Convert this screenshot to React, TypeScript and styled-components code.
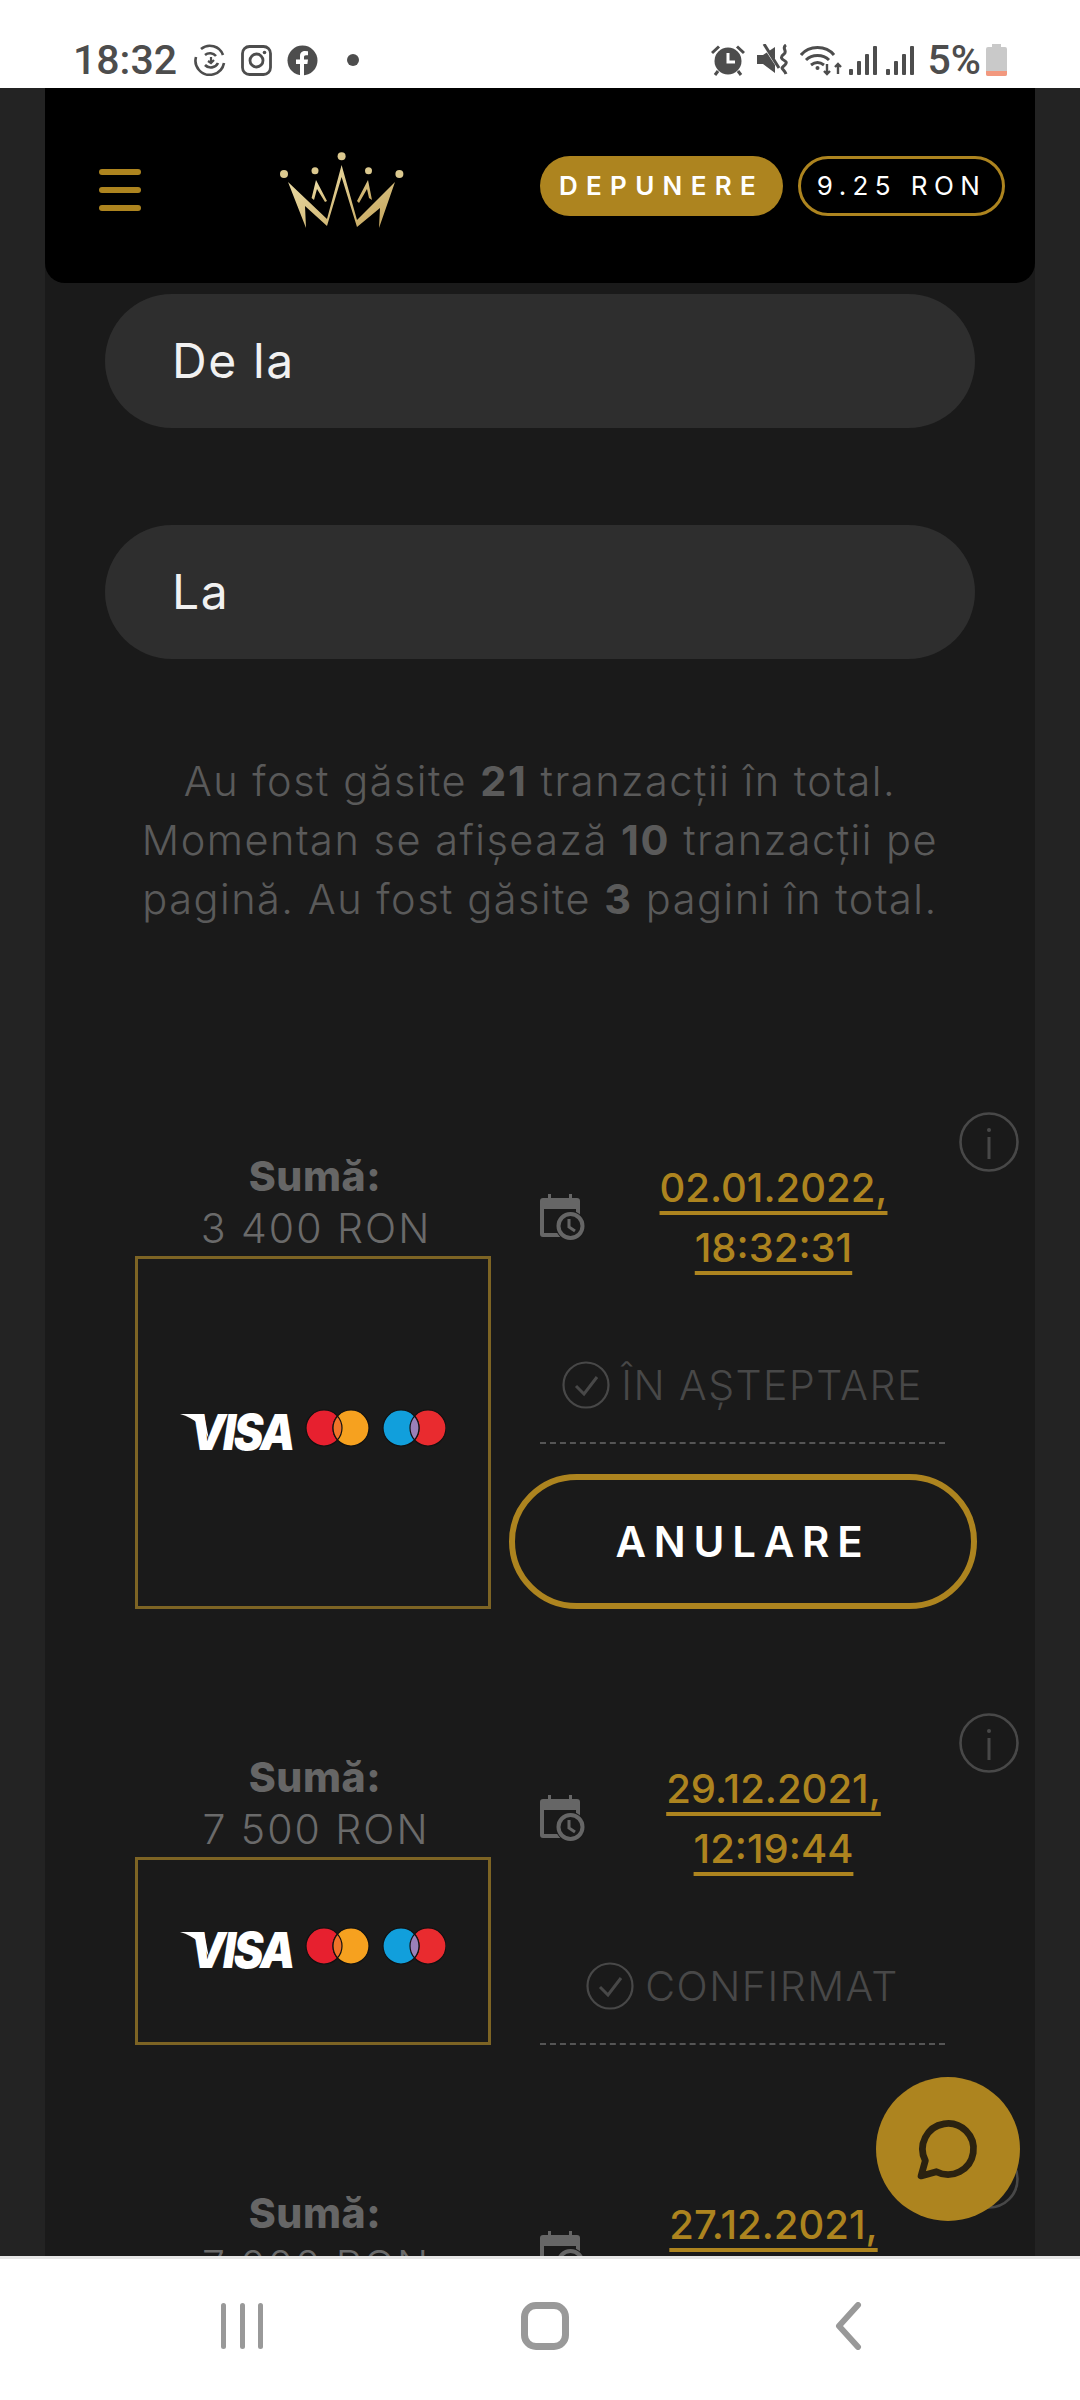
import React from "react";
import styled, { createGlobalStyle } from "styled-components";

const Global = createGlobalStyle`
  html, body { margin: 0; padding: 0; background: #fff; }
  * { box-sizing: border-box; }
`;

const GOLD = "#ad841f";
const SANS = `Inter, "Open Sans", "Liberation Sans", sans-serif`;

const Screen = styled.div`
  width: 1080px;
  height: 2400px;
  display: flex;
  flex-direction: column;
  overflow: hidden;
  font-family: ${SANS};
  background: #fff;
`;

const StatusBar = styled.div`
  height: 88px;
  flex: none;
  display: flex;
  align-items: center;
  padding: 32px 73px 0 73px;
  color: #4d4d4d;
  font-family: Roboto, sans-serif;
  font-weight: 500;
`;
const Clock = styled.span`
  font-size: 41px;
  line-height: 1;
  margin-right: 17px;
`;
const StatusIcon = styled.svg<{ $ml?: number }>`
  display: block;
  flex: none;
  margin-left: ${(p) => p.$ml ?? 0}px;
`;
const Spacer = styled.div`
  flex: 1;
`;
const Percent = styled.span`
  font-size: 41px;
  line-height: 1;
  margin-left: 14px;
  margin-right: 5px;
`;

const Page = styled.div`
  flex: 1;
  min-height: 0;
  position: relative;
  background: #232323;
  overflow: hidden;
`;
const Column = styled.div`
  margin: 0 45px;
  height: 100%;
  background: #1a1a1a;
  overflow: hidden;
`;
const Header = styled.header`
  height: 195px;
  background: #000;
  border-radius: 0 0 20px 20px;
  display: flex;
  align-items: center;
  padding: 0 30px 0 54px;
`;
const Burger = styled.div`
  width: 42px;
  display: flex;
  flex-direction: column;
  gap: 12px;
  margin-top: 9px;
  span {
    display: block;
    height: 6px;
    border-radius: 3px;
    background: ${GOLD};
  }
`;
const Crown = styled.svg`
  display: block;
  margin-left: 139px;
  margin-top: 9px;
`;
const Pill = styled.div<{ $filled?: boolean }>`
  height: 60px;
  border-radius: 30px;
  display: flex;
  align-items: center;
  justify-content: center;
  font-size: 26px;
  color: #fff;
  width: ${(p) => (p.$filled ? 243 : 207)}px;
  margin-left: ${(p) => (p.$filled ? 0 : 15)}px;
  background: ${(p) => (p.$filled ? GOLD : "transparent")};
  border: ${(p) => (p.$filled ? "none" : `3px solid ${GOLD}`)};
  font-weight: ${(p) => (p.$filled ? 600 : 400)};
  letter-spacing: ${(p) => (p.$filled ? 8.3 : 6.4)}px;
`;

const Form = styled.div`
  margin: 11px 60px 0;
  display: flex;
  flex-direction: column;
  gap: 97px;
`;
const Field = styled.div`
  height: 134px;
  border-radius: 67px;
  background: #2e2e2e;
  padding: 0 0 2px 67px;
  display: flex;
  align-items: center;
  color: #f1f1f1;
  font-size: 48px;
  letter-spacing: 1.6px;
  font-weight: 400;
`;
const Summary = styled.p`
  margin: 93px 0 0;
  text-align: center;
  font-size: 41.5px;
  line-height: 59px;
  color: #5a5a5a;
  font-weight: 300;
  letter-spacing: 1.5px;
  b {
    font-weight: 700;
  }
`;
const List = styled.div`
  margin: 219px 0 0 90px;
  width: 842px;
  display: flex;
  flex-direction: column;
  gap: 140px;
`;
const Row = styled.section`
  position: relative;
  display: grid;
  grid-template-columns: 356px 468px;
  column-gap: 18px;
`;
const Left = styled.div`
  padding-top: 2px;
  display: flex;
  flex-direction: column;
  align-items: stretch;
  text-align: center;
`;
const SumLabel = styled.div`
  font-size: 41px;
  line-height: 52px;
  font-weight: 800;
  color: #666;
  padding-left: 4px;
  letter-spacing: 0.6px;
`;
const SumValue = styled.div`
  font-size: 41px;
  line-height: 52px;
  font-weight: 300;
  color: #6a6a6a;
  padding-left: 6px;
  letter-spacing: 2px;
`;
const LogoBox = styled.div`
  margin-top: 2px;
  flex: 1;
  border: 3px solid #7d6424;
  display: flex;
  align-items: center;
  justify-content: center;
`;
const Right = styled.div`
  padding-top: 10px;
  display: flex;
  flex-direction: column;
`;
const Inner = styled.div`
  margin: 0 32px 0 31px;
`;
const DateRow = styled.div`
  display: flex;
  align-items: center;
`;
const DateBlock = styled.div`
  flex: 1;
  padding-left: 16px;
  display: flex;
  flex-direction: column;
  align-items: center;
  font-size: 40px;
  line-height: 60px;
  font-weight: 500;
  color: ${GOLD};
  span {
    text-decoration: underline;
    text-decoration-thickness: 4px;
    text-underline-offset: 9px;
    text-decoration-skip-ink: none;
  }
`;
const Status = styled.div`
  margin-top: 78px;
  height: 88px;
  padding-bottom: 28px;
  border-bottom: 2px dashed #555;
  display: flex;
  align-items: center;
  justify-content: center;
  gap: 11px;
  color: #484848;
  font-size: 41px;
  font-weight: 300;
  letter-spacing: 1.5px;
  white-space: nowrap;
`;
const CancelButton = styled.button`
  margin-top: 30px;
  height: 135px;
  width: 468px;
  border-radius: 68px;
  border: 6px solid ${GOLD};
  background: transparent;
  color: #fff;
  font-family: ${SANS};
  font-size: 42px;
  font-weight: 600;
  letter-spacing: 7.8px;
  padding: 0;
`;
const Info = styled.svg`
  position: absolute;
  top: -36px;
  right: -42px;
  display: block;
`;
const Chat = styled.button`
  position: absolute;
  left: 876px;
  top: 1989px;
  width: 144px;
  height: 144px;
  border-radius: 50%;
  border: none;
  padding: 0;
  background: ${GOLD};
  display: flex;
  align-items: center;
  justify-content: center;
`;

const NavBar = styled.nav`
  height: 144px;
  flex: none;
  background: #fff;
  border-top: 3px solid #e6e6e6;
  display: flex;
  align-items: center;
  padding: 0 0 7px 221px;
`;
const NavBars = styled.div`
  width: 42px;
  height: 46px;
  display: flex;
  justify-content: space-between;
  span {
    width: 5px;
    border-radius: 3px;
    background: #999;
  }
`;
const NavHome = styled.div`
  width: 48px;
  height: 48px;
  margin: 0 265px 0 258px;
  border: 7px solid #999;
  border-radius: 15px;
`;

const AlarmIcon = () => (
  <StatusIcon width="34" height="32" viewBox="0 0 34 32" fill="#4d4d4d">
    <circle cx="17" cy="17" r="13.5" />
    <path d="M1 9 8 2.5 M33 9 26 2.5" stroke="#4d4d4d" strokeWidth="3" fill="none" />
    <path d="M17 9v9h7" stroke="#fff" strokeWidth="3" fill="none" />
    <path d="M7 27 4 31 M27 27l3 4" stroke="#4d4d4d" strokeWidth="3" />
  </StatusIcon>
);

const MuteIcon = () => (
  <StatusIcon $ml={12} width="32" height="32" viewBox="0 0 32 32" fill="#4d4d4d">
    <path d="M0 11h6L18 3v26L6 20H0z" />
    <path d="M6 0 25 29" stroke="#fff" strokeWidth="3" />
    <path d="M7 0 22 24" stroke="#4d4d4d" strokeWidth="3" />
    <path d="M29 1c-5 3 2 6-2 9s-3 5 1 7-3 6-3 7 3 3 4 6" fill="none" stroke="#4d4d4d" strokeWidth="3" />
  </StatusIcon>
);

const WifiIcon = () => (
  <StatusIcon $ml={11} width="42" height="32" viewBox="0 0 42 32" fill="none" stroke="#4d4d4d" strokeWidth="3">
    <path d="M1 11C9 1 26 1 34 11" />
    <path d="M6 16c6-6 17-6 23 0" />
    <path d="M11 21c4-3 9-3 13 0" />
    <circle cx="17.5" cy="24" r="2" fill="#4d4d4d" stroke="none" />
    <path d="M27 20v10m-3-3 3 3 3-3M38 30V20m-3 3 3-3 3 3" strokeWidth="2.4" />
  </StatusIcon>
);

const SignalIcon = ({ ml }: { ml: number }) => (
  <StatusIcon $ml={ml} width="28" height="30" viewBox="0 0 28 30" fill="#4d4d4d">
    <rect x="0" y="24" width="4" height="6" rx="1" />
    <rect x="8" y="16" width="4" height="14" rx="1" />
    <rect x="16" y="9" width="4" height="21" rx="1" />
    <rect x="24" y="1" width="4" height="29" rx="1" />
  </StatusIcon>
);

const VisaMark = () => (
  <svg width="266" height="60" viewBox="0 -6 266 60" style={{ display: "block" }}>
    <path d="M0 5h24l5 26C26 20 15 9 0 5z" fill="#fff" />
    <text x="10" y="41" fill="#fff" fontFamily="Inter, sans-serif" fontWeight="900" fontStyle="italic" fontSize="49" letterSpacing="-2.5" textLength="103" lengthAdjust="spacingAndGlyphs">
      VISA
    </text>
    <g stroke="#111" strokeWidth="1.2">
      <circle cx="144" cy="19" r="18" fill="#e7202f" />
      <circle cx="171" cy="19" r="18" fill="#f6a11f" />
      <path d="M157.5 7.1a18 18 0 0 1 0 23.8a18 18 0 0 1 0-23.8z" fill="#ef7329" />
      <circle cx="248" cy="19" r="18" fill="#e92b2f" />
      <circle cx="221" cy="19" r="18" fill="#119fdc" />
      <path d="M234.5 7.1a18 18 0 0 1 0 23.8a18 18 0 0 1 0-23.8z" fill="#9a80b8" />
    </g>
  </svg>
);

const CalendarIcon = () => (
  <svg width="46" height="48" viewBox="0 0 46 48" style={{ display: "block", flex: "none" }}>
    <path d="M8 0h3v4h18V0h3v4h5a3 3 0 0 1 3 3v33a3 3 0 0 1-3 3H3a3 3 0 0 1-3-3V7a3 3 0 0 1 3-3h5z" fill="#666" />
    <rect x="4" y="15" width="32" height="24" fill="#1a1a1a" />
    <circle cx="30.5" cy="32" r="15" fill="#1a1a1a" />
    <circle cx="30.5" cy="32" r="12" fill="none" stroke="#666" strokeWidth="4" />
    <path d="M29 25v8l6 4" fill="none" stroke="#666" strokeWidth="3" />
  </svg>
);

const CheckIcon = () => (
  <svg width="48" height="48" viewBox="0 0 48 48" fill="none" stroke="#484848" strokeWidth="2.2" style={{ display: "block", flex: "none" }}>
    <circle cx="24" cy="24" r="22.5" />
    <path d="M14 25l8 8 13-17" strokeWidth="3" />
  </svg>
);

const InfoIcon = () => (
  <Info width="60" height="60" viewBox="0 0 60 60" fill="none" stroke="#484848" strokeWidth="2.6">
    <circle cx="30" cy="30" r="28.5" />
    <path d="M30 25v22" strokeWidth="3" />
    <circle cx="30" cy="18" r="2" fill="#484848" stroke="none" />
  </Info>
);

type Tx = { amount: string; date: string; time: string; status?: string; cancel?: boolean };

const txs: Tx[] = [
  { amount: "3 400 RON", date: "02.01.2022,", time: "18:32:31", status: "ÎN AȘTEPTARE", cancel: true },
  { amount: "7 500 RON", date: "29.12.2021,", time: "12:19:44", status: "CONFIRMAT" },
  { amount: "7 000 RON", date: "27.12.2021,", time: "10:02:15", status: "CONFIRMAT" },
];

export default function App() {
  return (
    <Screen>
      <Global />
      <StatusBar>
        <Clock>18:32</Clock>
        <StatusIcon width="32" height="32" viewBox="0 0 32 32" fill="none" stroke="#4d4d4d" strokeWidth="2.6">
          <path d="M7 5A14 14 0 0 1 29 11" />
          <path d="M30 19A14.500 14.500 0 0 1 5 26 14 14 0 0 1 2 13" />
          <path d="M11 11a8 8 0 0 1 11 1M24 19a8 8 0 0 1-13 2" />
          <path d="M14 17l3 2 3-3M17 19v-6" strokeWidth="2.2" />
        </StatusIcon>
        <StatusIcon $ml={15} width="31" height="31" viewBox="0 0 31 31" fill="none" stroke="#4d4d4d" strokeWidth="2.8">
          <rect x="1.500" y="1.500" width="28" height="28" rx="7" />
          <circle cx="15.500" cy="15.500" r="6.500" />
          <circle cx="23.500" cy="7.500" r="1.800" fill="#4d4d4d" stroke="none" />
        </StatusIcon>
        <StatusIcon $ml={15} width="31" height="31" viewBox="0 0 31 31">
          <circle cx="15.500" cy="15.500" r="15" fill="#4d4d4d" />
          <path d="M13 31V19H9v-4.500h4v-3.300C13 7.500 15.200 6 18 6l3 .2v4h-2c-1.500 0-2 .7-2 2v2.300h4l-.6 4.500H17v12z" fill="#fff" />
        </StatusIcon>
        <StatusIcon $ml={29} width="12" height="12" viewBox="0 0 12 12">
          <circle cx="6" cy="6" r="6" fill="#4d4d4d" />
        </StatusIcon>
        <Spacer />
        <AlarmIcon />
        <MuteIcon />
        <WifiIcon />
        <SignalIcon ml={7} />
        <SignalIcon ml={9} />
        <Percent>5%</Percent>
        <StatusIcon width="21" height="32" viewBox="0 0 21 32">
          <path d="M6 0h9v3h4a2 2 0 0 1 2 2v25a2 2 0 0 1-2 2H2a2 2 0 0 1-2-2V5a2 2 0 0 1 2-2h4z" fill="#c9c9c9" />
          <path d="M0 27h21v3a2 2 0 0 1-2 2H2a2 2 0 0 1-2-2z" fill="#f2987e" />
        </StatusIcon>
      </StatusBar>

      <Page>
        <Column>
          <Header>
            <Burger>
              <span />
              <span />
              <span />
            </Burger>
            <Crown width="125" height="84" viewBox="0 0 125 84">
              <defs>
                <linearGradient id="crownGold" x1="0" y1="0" x2="1" y2="1">
                  <stop offset="0" stopColor="#efe2ae" />
                  <stop offset="1" stopColor="#c4a45a" />
                </linearGradient>
              </defs>
              <g fill="#dcc98f">
                <circle cx="61.600" cy="8.300" r="4" />
                <circle cx="35" cy="22.700" r="3.500" />
                <circle cx="88.500" cy="22.700" r="3.500" />
                <circle cx="4" cy="26" r="4" />
                <circle cx="119.400" cy="26" r="4" />
              </g>
              <path
                d="M8 34 47 71 61.600 17 77 72 115 34 99 80 100 60 77 79 61.600 29 47 78 25 58 26 80Z"
                fill="url(#crownGold)"
              />
              <path d="M31.600 50 36 32 47 53 45 54 37 41 34 52ZM77 53 88 32 92 52 89 50 87 41 79 55Z" fill="url(#crownGold)" />
            </Crown>
            <Spacer />
            <Pill $filled>DEPUNERE</Pill>
            <Pill>9.25 RON</Pill>
          </Header>

          <Form>
            <Field>De la</Field>
            <Field>La</Field>
          </Form>

          <Summary>
            Au fost găsite <b>21</b> tranzacții în total.
            <br />
            Momentan se afișează <b>10</b> tranzacții pe
            <br />
            pagină. Au fost găsite <b>3</b> pagini în total.
          </Summary>

          <List>
            {txs.map((t) => (
              <Row key={t.date}>
                <InfoIcon />
                <Left>
                  <SumLabel>Sumă:</SumLabel>
                  <SumValue>{t.amount}</SumValue>
                  <LogoBox>
                    <VisaMark />
                  </LogoBox>
                </Left>
                <Right>
                  <Inner>
                    <DateRow>
                      <CalendarIcon />
                      <DateBlock>
                        <span>{t.date}</span>
                        <span>{t.time}</span>
                      </DateBlock>
                    </DateRow>
                    <Status>
                      <CheckIcon />
                      {t.status}
                    </Status>
                  </Inner>
                  {t.cancel && <CancelButton>ANULARE</CancelButton>}
                </Right>
              </Row>
            ))}
          </List>
        </Column>
        <Chat aria-label="chat">
          <svg width="68" height="68" viewBox="0 0 24 24" fill="none" stroke="#2b2210" strokeWidth="2.4" strokeLinejoin="round">
            <path d="M7.900 20A9 9 0 1 0 4 16.100L2.500 21.500Z" />
          </svg>
        </Chat>
      </Page>

      <NavBar>
        <NavBars>
          <span />
          <span />
          <span />
        </NavBars>
        <NavHome />
        <svg width="28" height="48" viewBox="0 0 28 48" fill="none" stroke="#999" strokeWidth="6" strokeLinecap="round" strokeLinejoin="round">
          <path d="M24 3 5 24l19 21" />
        </svg>
      </NavBar>
    </Screen>
  );
}
